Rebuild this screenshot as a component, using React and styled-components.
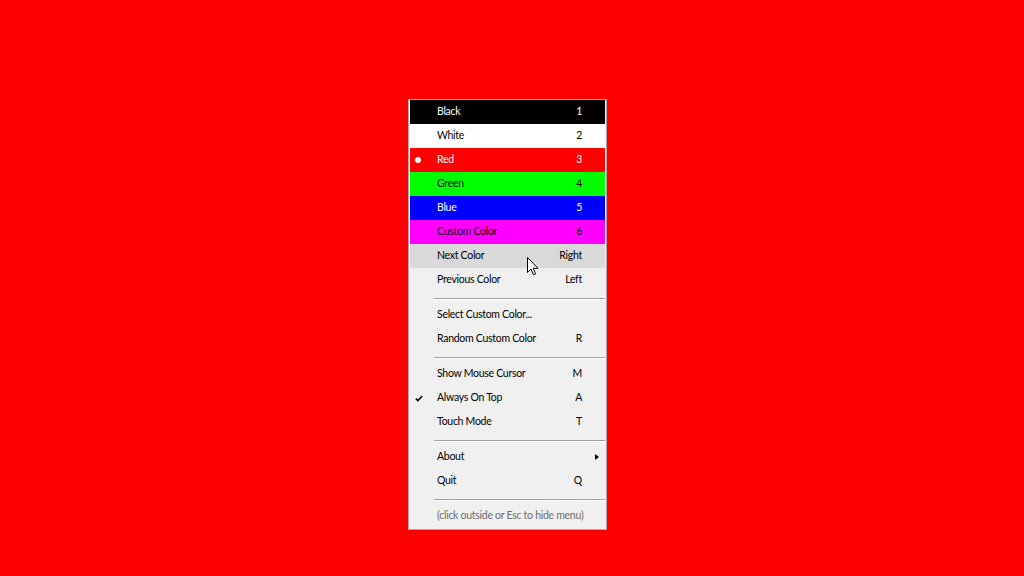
import styled, { createGlobalStyle } from 'styled-components';

const Global = createGlobalStyle`
  html, body { margin: 0; padding: 0; background: #ff0000; }
  body { font-family: 'Lato', 'Noto Sans', sans-serif; }
`;

const ITEMS = [
  { label: 'Black', key: '1', bg: '#000000', fg: '#ffffff' },
  { label: 'White', key: '2', bg: '#ffffff', fg: '#000000' },
  { label: 'Red', key: '3', bg: '#ff0000', fg: '#ffffff', mark: 'dot' },
  { label: 'Green', key: '4', bg: '#00ff00', fg: '#000000' },
  { label: 'Blue', key: '5', bg: '#0000ff', fg: '#ffffff' },
  { label: 'Custom Color', key: '6', bg: '#ff00ff', fg: '#000000' },
  { label: 'Next Color', key: 'Right', hover: true, cursor: true },
  { label: 'Previous Color', key: 'Left' },
  { sep: true },
  { label: 'Select Custom Color...' },
  { label: 'Random Custom Color', key: 'R' },
  { sep: true },
  { label: 'Show Mouse Cursor', key: 'M' },
  { label: 'Always On Top', key: 'A', mark: 'check' },
  { label: 'Touch Mode', key: 'T' },
  { sep: true },
  { label: 'About', sub: true },
  { label: 'Quit', key: 'Q' },
  { sep: true },
  { label: '(click outside or Esc to hide menu)', muted: true },
];

export default function App() {
  return (
    <>
      <Global />
      <Page>
        <Menu>
          {ITEMS.map((it, i) =>
            it.sep ? (
              <Separator key={i} />
            ) : (
              <Item key={i} $bg={it.hover ? '#d9d9d9' : it.bg} $fg={it.muted ? '#6d6d6d' : it.fg}>
                <Mark>
                  {it.mark === 'dot' && <Dot />}
                  {it.mark === 'check' && (
                    <svg width="8" height="7" viewBox="0 0 8 7">
                      <path d="M0.8 3.6 L2.9 5.6 L7.2 1" fill="none" stroke="#000" strokeWidth="1.5" />
                    </svg>
                  )}
                </Mark>
                <Label>{it.label}</Label>
                <Shortcut>{it.key}</Shortcut>
                <Arrow>{it.sub && <Tri />}</Arrow>
                {it.cursor && (
                  <Cursor width="12" height="19" viewBox="0 0 12 19">
                    <path
                      d="M0.5 0.5 L0.5 15.5 L4 12 L6.5 17.8 L8.6 16.9 L6.2 11.3 L11 11.3 Z"
                      fill="#fff"
                      stroke="#000"
                      strokeWidth="1"
                    />
                  </Cursor>
                )}
              </Item>
            )
          )}
        </Menu>
      </Page>
    </>
  );
}

const Page = styled.div`
  width: 1024px;
  height: 576px;
  box-sizing: border-box;
  padding: 99px 0 0 408px;
  display: flex;
  align-items: flex-start;
`;
const Menu = styled.div`
  width: 199px;
  box-sizing: border-box;
  border: 1px solid #a8a8a8;
  background: #f0f0f0;
  padding: 0 1px 1px 1px;
  display: flex;
  flex-direction: column;
  user-select: none;
`;
const Item = styled.div`
  position: relative;
  height: 24px;
  box-sizing: border-box;
  padding-bottom: 2px;
  display: grid;
  grid-template-columns: 27px minmax(0, 1fr) auto 23px;
  align-items: center;
  background: ${({ $bg }) => $bg || 'transparent'};
  color: ${({ $fg }) => $fg || '#000000'};
  font-size: 10.5px;
  letter-spacing: -0.28px;
  white-space: nowrap;
`;
const Mark = styled.div`
  display: flex;
  align-items: center;
  padding-left: 5px;
  padding-top: 2px;
`;
const Dot = styled.div`
  width: 6px;
  height: 6px;
  border-radius: 50%;
  background: #ffffff;
`;
const Label = styled.span`
  overflow: visible;
`;
const Shortcut = styled.span`
  text-align: right;
`;
const Arrow = styled.div`
  display: flex;
  justify-content: flex-end;
  padding-right: 6px;
  padding-top: 2px;
`;
const Tri = styled.div`
  width: 0;
  height: 0;
  border-top: 3.5px solid transparent;
  border-bottom: 3.5px solid transparent;
  border-left: 4px solid #000;
`;
const Separator = styled.div`
  height: 11px;
  box-sizing: border-box;
  display: flex;
  align-items: flex-start;
  padding: 6px 0 0 24px;
  &::before {
    content: '';
    flex: 1;
    height: 1px;
    background: #a0a0a0;
    border-bottom: 1px solid #ffffff;
  }
`;
const Cursor = styled.svg`
  position: absolute;
  left: 117px;
  top: 13px;
  pointer-events: none;
`;
